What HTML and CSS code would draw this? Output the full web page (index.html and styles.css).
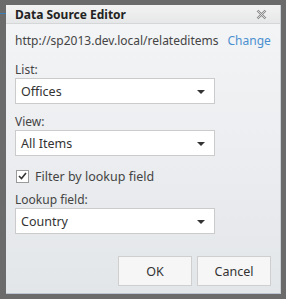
FILE: index.html
```html
<!DOCTYPE html>
<html>
<head>
<meta charset="utf-8">
<link rel="stylesheet" href="styles.css">
</head>
<body>
<div class="page-line"></div>
<div class="dialog">
  <div class="titlebar">
    <span class="title">Data Source Editor</span>
    <svg class="close" width="11" height="11" viewBox="0 0 11 11">
      <path d="M1.5 1.5 L9.5 9.5 M9.5 1.5 L1.5 9.5" stroke="#8a8a8a" stroke-width="2.4" fill="none"/>
      <path d="M1.5 1.5 L9.5 9.5 M9.5 1.5 L1.5 9.5" stroke="#e8e8e8" stroke-width="0.8" fill="none"/>
    </svg>
  </div>
  <div class="body">
    <div class="url-row">
      <span class="url">http://sp2013.dev.local/relateditems</span>
      <a class="change">Change</a>
    </div>
    <label class="label">List:</label>
    <div class="select"><span>Offices</span><span class="arrow"></span></div>
    <label class="label">View:</label>
    <div class="select"><span>All Items</span><span class="arrow"></span></div>
    <div class="check-row">
      <span class="checkbox">
        <svg width="9" height="8" viewBox="0 0 9 8"><path d="M1 4 L3.5 6.5 L8 1" stroke="#333" stroke-width="1.6" fill="none"/></svg>
      </span>
      <span>Filter by lookup field</span>
    </div>
    <label class="label label-tight">Lookup field:</label>
    <div class="select"><span>Country</span><span class="arrow"></span></div>
    <div class="buttons">
      <button class="btn btn-ok">OK</button>
      <button class="btn btn-cancel">Cancel</button>
    </div>
  </div>
</div>
</body>
</html>
```
FILE: styles.css
```css
html, body {
  margin: 0;
  padding: 0;
}
body {
  background: #6b6b6b;
  width: 286px;
  height: 299px;
  overflow: hidden;
  position: relative;
  font-family: "Noto Sans", "Open Sans", sans-serif;
  color: #444;
}
.page-line {
  position: absolute;
  left: 0;
  top: 13px;
  width: 6px;
  height: 1px;
  background: #3b7fb8;
}
.dialog {
  margin: 5px 0 0 6px;
  width: 274px;
  height: 288px;
  border-right: 1px solid #c9ced3;
  border-bottom: 1px solid #bcc6d0;
  background: linear-gradient(#f4f5f7, #e3e6e9);
  display: flex;
  flex-direction: column;
}
.titlebar {
  height: 18px;
  background: linear-gradient(#f3f3f3, #e6e7e8);
  border-bottom: 1px solid #d4d6d8;
  display: flex;
  align-items: center;
  justify-content: space-between;
  padding: 0 13px 0 9px;
}
.title {
  font-weight: bold;
  font-size: 12px;
  color: #222;
}
.body {
  padding: 8px 0 0 9px;
  font-size: 12px;
  display: flex;
  flex-direction: column;
}
.url-row {
  display: flex;
  align-items: baseline;
  height: 20px;
}
.url {
  color: #444;
}
.change {
  color: #4a90d0;
  margin-left: 9px;
}
.label {
  display: block;
  margin-top: 9px;
  height: 17px;
  line-height: 17px;
}
.label-tight {
  margin-top: 5px;
}
.select {
  box-sizing: border-box;
  width: 200px;
  height: 26px;
  background: #fff;
  border: 1px solid #cbcbcb;
  display: flex;
  align-items: center;
  justify-content: space-between;
  padding: 0 9px 0 5px;
  color: #333;
  font-size: 12.5px;
}
.arrow {
  width: 0;
  height: 0;
  border-left: 4px solid transparent;
  border-right: 4px solid transparent;
  border-top: 4px solid #333;
  margin-top: 1px;
}
.check-row {
  display: flex;
  align-items: center;
  margin-top: 10px;
  height: 20px;
  gap: 6px;
  margin-left: 1px;
  font-size: 12.5px;
}
.checkbox {
  box-sizing: border-box;
  width: 13px;
  height: 13px;
  border: 1px solid #9a9a9a;
  background: #fff;
  display: flex;
  align-items: center;
  justify-content: center;
}
.buttons {
  display: flex;
  justify-content: flex-end;
  gap: 5px;
  margin-top: 22px;
  padding-right: 9px;
}
.btn {
  box-sizing: border-box;
  height: 30px;
  border: 1px solid #cfcfcf;
  background: #f6f6f6;
  font-family: "Noto Sans", "Open Sans", sans-serif;
  font-size: 12.5px;
  color: #333;
  padding: 0;
}
.btn-ok {
  width: 74px;
}
.btn-cancel {
  width: 74px;
}
```
